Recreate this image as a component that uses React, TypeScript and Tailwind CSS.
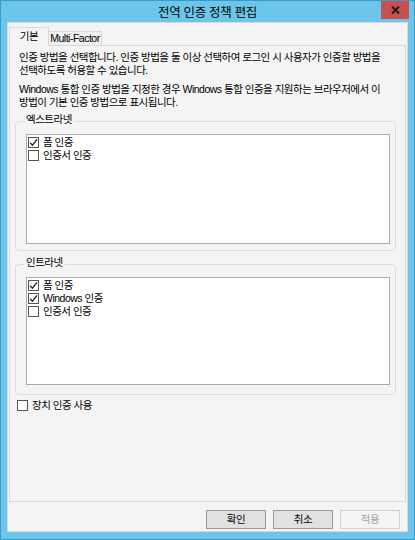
import React from "react"

/******************************************************************************
                              Components
******************************************************************************/

const font = "font-['Liberation_Sans','Noto_Sans_CJK_KR',sans-serif]"

/** Small Windows-style check box. */
function CheckBox({ checked }: { checked?: boolean }) {
  return (
    <span className="flex h-[11px] w-[11px] shrink-0 items-center justify-center border border-[#555555] bg-white">
      {checked && (
        <svg width="9" height="9" viewBox="0 0 9 9">
          <path d="M1 4.6 L3.4 7.2 L8 1.4" fill="none" stroke="#222" strokeWidth="1.3" />
        </svg>
      )}
    </span>
  )
}

/** One row of a checked list box. */
function ListItem({ label, checked }: { label: string; checked?: boolean }) {
  return (
    <div className="flex h-[13px] items-center gap-[4px] pl-[1px]">
      <CheckBox checked={checked} />
      <span className="whitespace-nowrap leading-[13px]">{label}</span>
    </div>
  )
}

/** Group box with a caption and a checked list inside. */
function Group({
  title,
  items,
  height,
  listHeight,
  className,
}: {
  title: string
  items: { label: string; checked?: boolean }[]
  height: string
  listHeight: string
  className: string
}) {
  return (
    <div className={`relative ml-[5px] w-[381px] rounded-[4px] border border-[#dcdcdc] ${height} ${className}`}>
      <span className="absolute left-[8px] top-[-9px] bg-[#f4f4f4] px-[2px] leading-[13px]">
        {title}
      </span>
      <div className={`ml-[10px] mt-[12px] w-[364px] border border-[#acacac] bg-white pt-[1px] ${listHeight}`}>
        {items.map((item) => (
          <ListItem key={item.label} label={item.label} checked={item.checked} />
        ))}
      </div>
    </div>
  )
}

function DialogButton({ label, disabled }: { label: string; disabled?: boolean }) {
  return (
    <button
      className={
        disabled
          ? "flex h-[19px] w-[60px] items-center justify-center border border-[#d2d2d2] bg-[#f4f4f4] text-[#a3a3a3]"
          : "flex h-[19px] w-[60px] items-center justify-center border border-[#9a9a9a] bg-[#e1e1e1] text-black"
      }
    >
      {label}
    </button>
  )
}

export default function App() {
  return (
    <div
      className={`relative flex h-[540px] w-[415px] flex-col border border-[#3a9bca] bg-[#6bc6e9] text-[10.5px] tracking-[-0.5px] text-black ${font}`}
    >
      {/* title bar */}
      <div className="flex h-[21px] items-center justify-center pt-[3px] text-[12.5px] tracking-[-0.3px]">
        전역 인증 정책 편집
      </div>
      <div className="absolute right-[5px] top-0 flex h-[18px] w-[28px] items-center justify-center bg-[#c75050]">
        <svg width="9" height="8" viewBox="0 0 9 8">
          <path d="M1 0.5 L8 7.5 M8 0.5 L1 7.5" stroke="#1e1e1e" strokeWidth="2" />
        </svg>
      </div>

      {/* client area */}
      <div className="mx-[6px] flex h-[510px] flex-col border border-[#d8d8d8] bg-[#f4f4f4]">
        <div className="flex items-end pl-[1px] pt-[4px]">
          <div className="relative z-10 -mb-px flex h-[19px] w-[40px] items-center justify-center border border-b-0 border-[#d9d9d9] bg-[#f4f4f4] pb-[1px]">
            기본
          </div>
          <div className="flex h-[14px] w-[53px] items-center justify-center border border-l-0 border-b-0 border-[#d9d9d9] bg-[#f0f0f0]">
            Multi-Factor
          </div>
        </div>

        <div className="ml-[1px] h-[457px] w-[397px] border border-[#d9d9d9] bg-[#f4f4f4]">
          <div className="whitespace-nowrap pl-[9px] pt-[5px] leading-[13px]">
            <p>
              인증 방법을 선택합니다. 인증 방법을 둘 이상 선택하여 로그인 시 사용자가 인증할 방법을
              <br />
              선택하도록 허용할 수 있습니다.
            </p>
            <p className="mt-[6px]">
              Windows 통합 인증 방법을 지정한 경우 Windows 통합 인증을 지원하는 브라우저에서 이
              <br />
              방법이 기본 인증 방법으로 표시됩니다.
            </p>
          </div>

          <Group
            title="엑스트라넷"
            className="mt-[12px]"
            height="h-[130px]"
            listHeight="h-[110px]"
            items={[
              { label: "폼 인증", checked: true },
              { label: "인증서 인증" },
            ]}
          />

          <Group
            title="인트라넷"
            className="mt-[13px]"
            height="h-[131px]"
            listHeight="h-[108px]"
            items={[
              { label: "폼 인증", checked: true },
              { label: "Windows 인증", checked: true },
              { label: "인증서 인증" },
            ]}
          />

          <div className="ml-[7px] mt-[4px] flex h-[13px] items-center gap-[4px]">
            <CheckBox />
            <span className="leading-[13px]">장치 인증 사용</span>
          </div>
        </div>

        <div className="mt-[8px] flex justify-end gap-[7px] pr-[7px]">
          <DialogButton label="확인" />
          <DialogButton label="취소" />
          <DialogButton label="적용" disabled />
        </div>
      </div>
    </div>
  )
}
